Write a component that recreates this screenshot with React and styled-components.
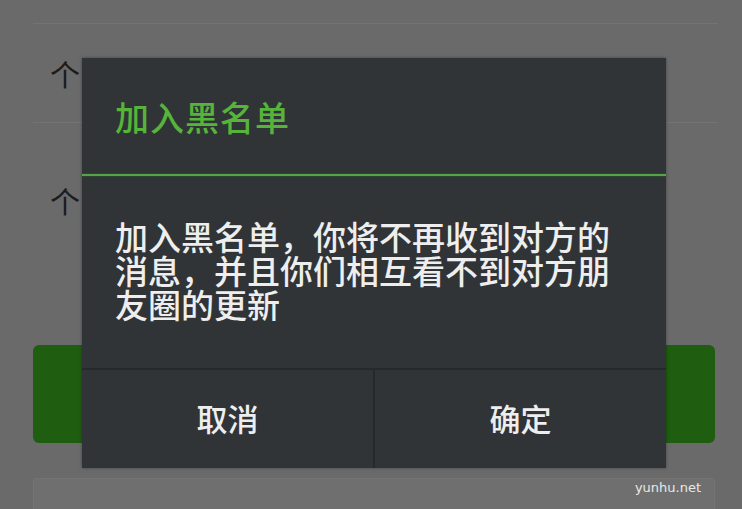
import React from "react";
import styled, { createGlobalStyle } from "styled-components";

const Global = createGlobalStyle`
  html, body { margin: 0; padding: 0; }
  body {
    width: 742px; height: 509px; overflow: hidden;
    background: #6b6b6b;
    font-family: "Noto Sans CJK SC", "Noto Sans", sans-serif;
  }
`;

const Page = styled.div`
  position: relative;
  width: 742px;
  height: 509px;
  overflow: hidden;
  background: #6a6a6a;
`;

const List = styled.div`
  display: flex;
  flex-direction: column;
  padding: 0 24px 0 33px;
`;

const Row = styled.div`
  height: ${(p) => p.$h}px;
  display: flex;
  align-items: center;
  padding-left: 17px;
  border-bottom: ${(p) => (p.$line ? "1px solid #737373" : "none")};
  color: #1c1c1c;
  font-size: 30px;
  line-height: 1;
  box-sizing: border-box;
`;

const Spacer = styled.div`
  height: ${(p) => p.$h}px;
`;

const GreenButton = styled.div`
  height: 98px;
  margin-right: 3px;
  background: #1f5d10;
  border-radius: 6px;
`;

const Card = styled.div`
  margin-top: 35px;
  height: 60px;
  background: #6f6f6f;
  border: 1px solid #747474;
  border-radius: 3px;
  margin-right: 3px;
`;

const Dialog = styled.div`
  position: absolute;
  left: 82px;
  top: 58px;
  width: 584px;
  height: 410px;
  background: #303437;
  display: flex;
  flex-direction: column;
  box-shadow: 0 0 3px rgba(0, 0, 0, 0.35);
`;

const Title = styled.div`
  height: 116px;
  display: flex;
  align-items: center;
  padding-left: 33px;
  color: #56b43a;
  font-size: 34px;
  font-weight: 500;
  letter-spacing: 1px;
`;

const GreenLine = styled.div`
  height: 2px;
  background: #55a44a;
  box-shadow: 0 0 2px #2c6a24;
`;

const Body = styled.div`
  flex: 1;
  padding: 43px 0 0 33px;
  box-sizing: border-box;
`;

const Message = styled.p`
  margin: 0;
  width: 505px;
  color: #eeeeee;
  font-size: 33px;
  font-weight: 500;
  line-height: 34px;
`;

const Divider = styled.div`
  height: 2px;
  background: #26292b;
`;

const Buttons = styled.div`
  height: 98px;
  display: grid;
  grid-template-columns: 1fr 2px 1fr;
`;

const Btn = styled.div`
  display: flex;
  align-items: center;
  justify-content: center;
  padding-bottom: 3px;
  color: #eeeeee;
  font-size: 31px;
  font-weight: 500;
`;

const VDivider = styled.div`
  background: #26292b;
`;

const Watermark = styled.div`
  position: absolute;
  right: 41px;
  bottom: 14px;
  color: #e8e8e8;
  font-family: "DejaVu Sans", sans-serif;
  font-size: 13px;
`;

export default function App() {
  return (
    <>
      <Global />
      <Page>
        <List>
          <Row $h={24} $line />
          <Row $h={99} $line>个</Row>
          <Row $h={154}>个</Row>
          <Spacer $h={68} />
          <GreenButton />
          <Card />
        </List>
        <Dialog>
          <Title>加入黑名单</Title>
          <GreenLine />
          <Body>
            <Message>加入黑名单，你将不再收到对方的消息，并且你们相互看不到对方朋友圈的更新</Message>
          </Body>
          <Divider />
          <Buttons>
            <Btn>取消</Btn>
            <VDivider />
            <Btn>确定</Btn>
          </Buttons>
        </Dialog>
        <Watermark>yunhu.net</Watermark>
      </Page>
    </>
  );
}
